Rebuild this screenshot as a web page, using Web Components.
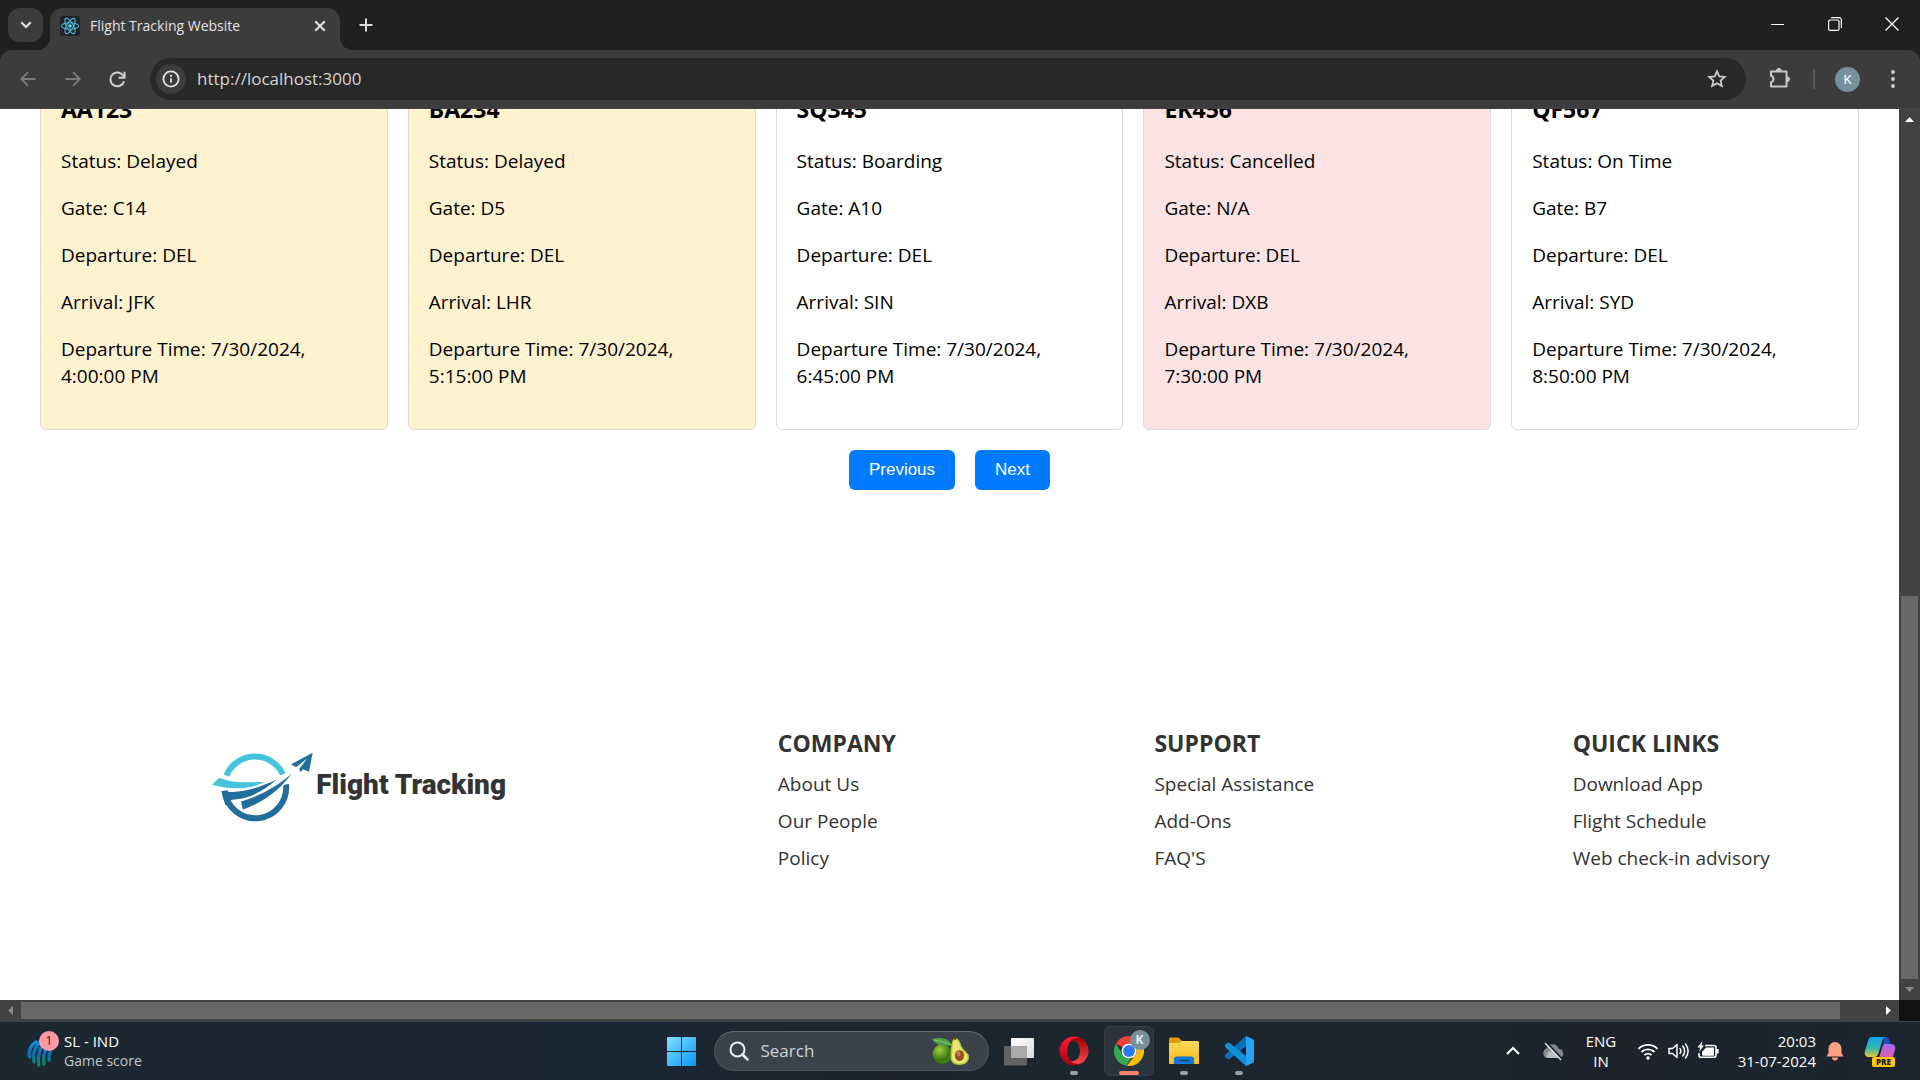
<!DOCTYPE html>
<html lang="en">
<head>
<meta charset="utf-8">
<title>Flight Tracking Website</title>
<style>
  html, body { margin: 0; height: 100%; }
  body { font-family: "Open Sans", "Noto Sans", sans-serif; overflow: hidden; }
</style>
</head>
<body>
<desktop-shell>
  <browser-tabs slot="browser"></browser-tabs>
  <browser-toolbar slot="browser"></browser-toolbar>
  <page-view slot="browser">
    <flight-list>
      <flight-card state="delayed" number="AA123" status="Delayed" gate="C14" to="JFK" time="4:00:00 PM"></flight-card>
      <flight-card state="delayed" number="BA234" status="Delayed" gate="D5" to="LHR" time="5:15:00 PM"></flight-card>
      <flight-card number="SQ345" status="Boarding" gate="A10" to="SIN" time="6:45:00 PM"></flight-card>
      <flight-card state="cancelled" number="EK456" status="Cancelled" gate="N/A" to="DXB" time="7:30:00 PM"></flight-card>
      <flight-card number="QF567" status="On Time" gate="B7" to="SYD" time="8:50:00 PM"></flight-card>
    </flight-list>
    <flight-pager></flight-pager>
    <site-footer>
      <site-logo></site-logo>
      <link-column heading="COMPANY" links="About Us|Our People|Policy"></link-column>
      <link-column heading="SUPPORT" links="Special Assistance|Add-Ons|FAQ'S"></link-column>
      <link-column heading="QUICK LINKS" links="Download App|Flight Schedule|Web check-in advisory"></link-column>
    </site-footer>
  </page-view>
  <task-bar slot="taskbar"></task-bar>
</desktop-shell>

<script>
const BASE = `:host,*{box-sizing:border-box}
  button{font:inherit;color:inherit;background:none;border:0;padding:0;margin:0;display:flex;align-items:center;justify-content:center;flex:none}
  svg{display:block;flex:none}`;

function element(name, css, html) {
  customElements.define(name, class extends HTMLElement {
    constructor() {
      super();
      const root = this.attachShadow({ mode: 'open' });
      const markup = typeof html === 'function' ? html(this) : html;
      root.innerHTML = `<style>${BASE}${css}</style>${markup}`;
    }
  });
}

element('desktop-shell', `
  :host{display:flex;flex-direction:column;height:100vh;background:#1f2120}
  .browser{flex:1;min-height:0;display:flex;flex-direction:column}`,
  `<div class="browser"><slot name="browser"></slot></div><slot name="taskbar"></slot>`);

/* ---------- browser window ---------- */
element('browser-tabs', `
  :host{display:flex;align-items:flex-end;height:50px;flex:none;background:#1f2120;color:#e3e3e3;padding-left:8px}
  .search{width:35px;height:34px;border-radius:12px;background:#3c3c3c;margin-bottom:8px}
  .tab{position:relative;display:flex;align-items:center;width:290px;height:42px;margin-left:7px;padding:0 12px 6px 10px;background:#3c3c3c;border-radius:13px 13px 0 0;font-size:14px;line-height:20px}
  .tab::before,.tab::after{content:"";position:absolute;bottom:0;width:13px;height:13px}
  .tab::before{right:100%;background:radial-gradient(circle at 0 0,transparent 13px,#3c3c3c 13px)}
  .tab::after{left:100%;background:radial-gradient(circle at 100% 0,transparent 13px,#3c3c3c 13px)}
  .title{flex:1;margin-left:10px;white-space:nowrap}
  .add{width:36px;height:34px;margin:0 0 8px 8px}
  .win{display:flex;margin-left:auto;align-self:stretch}
  .win button{width:57px;height:48px}`,
  `<button class="search" aria-label="Search tabs"><svg width="12" height="8" viewBox="0 0 12 8" fill="none" stroke="#e3e3e3" stroke-width="2.2"><path d="M1.3 1.3 6 6l4.700-4.700"/></svg></button>
  <div class="tab">
    <svg width="20" height="20" viewBox="0 0 20 20"><rect width="20" height="20" rx="2" fill="#20232a"/><g fill="none" stroke="#4fb9d3" stroke-width="1.100"><ellipse cx="10" cy="10" rx="8.600" ry="3.300"/><ellipse cx="10" cy="10" rx="8.600" ry="3.300" transform="rotate(60 10 10)"/><ellipse cx="10" cy="10" rx="8.600" ry="3.300" transform="rotate(120 10 10)"/></g><circle cx="10" cy="10" r="1.800" fill="#61dafb"/></svg>
    <span class="title">Flight Tracking Website</span>
    <button aria-label="Close tab"><svg width="16" height="16" viewBox="0 0 16 16" stroke="#e3e3e3" stroke-width="2"><path d="m3.200 3.200 9.600 9.600M12.800 3.200l-9.600 9.600"/></svg></button>
  </div>
  <button class="add" aria-label="New tab"><svg width="14" height="14" viewBox="0 0 14 14" stroke="#dcdcdc" stroke-width="2"><path d="M7 .5v13M.5 7h13"/></svg></button>
  <div class="win">
    <button aria-label="Minimize"><svg width="13" height="13" viewBox="0 0 13 13"><path d="M0 6h13v1H0z" fill="#fff"/></svg></button>
    <button aria-label="Restore"><svg width="14" height="14" viewBox="0 0 14 14" fill="none" stroke="#fff" stroke-width="1.200"><rect x=".6" y="3" width="10.400" height="10.400" rx="1.500"/><path d="M3.200 .700H11a2.400 2.400 0 0 1 2.400 2.400V11" /></svg></button>
    <button aria-label="Close"><svg width="14" height="14" viewBox="0 0 14 14" stroke="#fff" stroke-width="1.200"><path d="m.5.5 13 13M13.500.5l-13 13"/></svg></button>
  </div>`);

element('browser-toolbar', `
  :host{display:block;flex:none;background:#1f2120}
  .bar{display:flex;align-items:center;height:59px;padding:0 5px;background:#3c3c3c;border-radius:12px 12px 0 0;border-bottom:1px solid #444}
  .nav{width:45px;height:40px}
  .omni{display:flex;align-items:center;flex:1;height:42px;margin-left:10px;padding:0 18px 0 6px;border-radius:21px;background:#282828}
  .info{width:30px;height:30px;border-radius:50%;background:#3c3c3c}
  input{flex:1;min-width:0;margin:0 8px 0 11px;padding:0;border:0;outline:0;background:none;color:#d6d6d6;font:17px/24px "Open Sans","Noto Sans",sans-serif}
  .ext{width:67px;height:40px}
  i{width:2px;height:20px;background:#5a5a5a}
  .me{width:25px;height:25px;border-radius:50%;background:#78909c;color:#fff;font:13px/25px Roboto,sans-serif;margin:0 21px 0 20px}
  .more{width:24px;height:40px;margin-right:10px}`,
  `<div class="bar">
    <button class="nav" aria-label="Back"><svg width="16" height="16" viewBox="0 0 16 16" fill="none" stroke="#7c7c7c" stroke-width="1.800"><path d="M15.500 8H1.500M8 1.200 1.300 8 8 14.800"/></svg></button>
    <button class="nav" aria-label="Forward"><svg width="16" height="16" viewBox="0 0 16 16" fill="none" stroke="#7c7c7c" stroke-width="1.800"><path d="M.5 8h14M8 1.200 14.700 8 8 14.800"/></svg></button>
    <button class="nav" aria-label="Reload"><svg width="17" height="17" viewBox="0 0 17 17" fill="none" stroke="#d0d0d0" stroke-width="2"><path d="M15 10.200A6.900 6.900 0 1 1 14.200 4.800L15.500 6.500"/><path d="M15.500.8v5.900H9.600"/></svg></button>
    <div class="omni">
      <button class="info" aria-label="Site information"><svg width="18" height="18" viewBox="0 0 18 18" fill="none" stroke="#e3e3e3" stroke-width="1.800"><circle cx="9" cy="9" r="7.600"/><path d="M9 8.200v4.600M9 4.800v1.900"/></svg></button>
      <input aria-label="Address" value="http://localhost:3000">
      <button aria-label="Bookmark"><svg width="22" height="22" viewBox="0 0 22 22" fill="none" stroke="#d0d0d0" stroke-width="1.700"><path d="m11 3.200 2.200 5.200 5.700.5-4.300 3.700 1.300 5.500L11 15.200l-4.900 2.900 1.300-5.500-4.300-3.700 5.700-.5z"/></svg></button>
    </div>
    <button class="ext" aria-label="Extensions"><svg width="22" height="22" viewBox="0 0 22 22" fill="none" stroke="#c8c8c8" stroke-width="2" stroke-linejoin="round"><path d="M2 3.500h15.500v15H2v-4.300a3.300 3.300 0 0 0 0-6.400z"/><path d="M7.500 2.800a2.400 2.400 0 0 1 4.800 0zM18.200 8.800a2.400 2.400 0 0 1 0 4.800z" fill="#c8c8c8" stroke-width="1"/></svg></button>
    <i></i>
    <button class="me" aria-label="Profile K">K</button>
    <button class="more" aria-label="Menu"><svg width="4" height="18" viewBox="0 0 4 18" fill="#d0d0d0"><circle cx="2" cy="2" r="1.900"/><circle cx="2" cy="9" r="1.900"/><circle cx="2" cy="16" r="1.900"/></svg></button>
  </div>`);

element('scroll-bar', `
  :host{display:flex;background:#424242}
  :host([axis=y]){flex-direction:column;width:21px}
  :host([axis=x]){height:21px}
  b{flex:none;width:21px;height:21px;display:grid;place-items:center}
  .thumb{background:#686868}
  :host([axis=y]) .thumb{margin:0 2px}
  :host([axis=x]) .thumb{margin:2px 0}`,
  host => {
    const y = host.getAttribute('axis') === 'y';
    const tri = (d, c) => `<b><svg width="9" height="9" viewBox="0 0 9 9" fill="${c}"><path d="${d}"/></svg></b>`;
    return y
      ? tri('M0 7h9L4.500 2z', '#fff') + '<span style="flex:466"></span><span class="thumb" style="flex:383"></span>' + tri('M0 2h9L4.500 7z', '#8a8a8a')
      : tri('M7 0v9L2 4.500z', '#8a8a8a') + '<span class="thumb" style="flex:1819"></span><span style="flex:38"></span>' + tri('M2 0v9l5-4.500z', '#fff');
  });

/* Page is scrolled to its end: content is anchored to the bottom edge. */
element('page-view', `
  :host{flex:1;min-height:0;display:grid;grid-template:minmax(0,1fr) 21px / minmax(0,1fr) 21px;background:#fff}
  main{display:flex;flex-direction:column;justify-content:flex-end;overflow:hidden;background:#fff}
  .corner{background:#121212}`,
  `<main><slot></slot></main><scroll-bar axis="y"></scroll-bar><scroll-bar axis="x"></scroll-bar><div class="corner"></div>`);

element('flight-list', `
  :host{display:grid;flex:none;grid-template-columns:repeat(5,minmax(0,1fr));gap:20px;padding:0 40px}`, `<slot></slot>`);

element('flight-card', `
  :host{display:block;padding:20px 20px 19px;border:1px solid #ddd;border-radius:6px;background:#fff;color:#000;font-size:19px;line-height:27px}
  :host([state=delayed]){background:#fff2cf}
  :host([state=cancelled]){background:#fbe3e3}
  h3{margin:0 0 23px;font-size:23px;line-height:31px;font-weight:700}
  p{margin:0 0 20px}`,
  h => {
    const a = n => h.getAttribute(n);
    return `<h3>${a('number')}</h3><p>Status: ${a('status')}</p><p>Gate: ${a('gate')}</p><p>Departure: DEL</p><p>Arrival: ${a('to')}</p><p>Departure Time: 7/30/2024, ${a('time')}</p>`;
  });

element('flight-pager', `
  :host{display:flex;flex:none;justify-content:center;gap:20px;margin-top:20px}
  button{height:40px;padding:0 20px;border-radius:6px;background:#007bff;color:#fff;font:17px/20px "Liberation Sans",Arial,sans-serif}`,
  `<button>Previous</button><button>Next</button>`);

element('site-footer', `
  :host{display:flex;flex:none;justify-content:space-around;align-items:flex-start;margin-top:238px;padding-bottom:128px;color:#333}`, `<slot></slot>`);

element('site-logo', `
  :host{display:flex;align-items:center;width:390px;height:118px;padding-left:81px;font:900 28px/36px Roboto,sans-serif;color:#333;white-space:nowrap}
  span{padding-bottom:4px}`,
  `<svg width="106" height="72" viewBox="60 96 318 216" aria-hidden="true">
    <path d="M109 170A93 93 0 0 1 279 166" fill="none" stroke="#45c3da" stroke-width="18"/>
    <path d="M104 215A92 92 0 0 0 288 196" fill="none" stroke="#216e9d" stroke-width="18"/>
    <path d="M94 216c56 10 110-8 168-35-32 26-62 46-96 55-20 5-36 4-48 8l12 20-24-6z" fill="#216e9d"/>
    <path d="M150 246C225 225 275 190 318 150 282 205 230 250 157 275z" fill="#216e9d" stroke="#fff" stroke-width="5"/>
    <path d="M88 176c40 17 84 14 134 13-36 20-92 26-156 8z" fill="#45c3da"/>
    <path d="M368 101 303 136l15 9 34-27-24 31 3 11 8-9 18 7z" fill="#216e9d"/>
  </svg><span>Flight Tracking</span>`);

element('link-column', `
  :host{display:block}
  h3{margin:0 0 12px;font-size:23px;line-height:31px;font-weight:700}
  ul{list-style:none;margin:0;padding:0;display:flex;flex-direction:column;gap:10px;font-size:19px;line-height:27px}
  a{display:block;color:inherit;text-decoration:none}`,
  h => `<h3>${h.getAttribute('heading')}</h3><ul>${h.getAttribute('links').split('|').map(t => `<li><a href="#">${t}</a></li>`).join('')}</ul>`);

/* ---------- taskbar ---------- */
element('task-app', `
  :host{display:block;flex:none;margin-left:5px}
  button{position:relative;width:50px;height:50px;border-radius:6px}
  :host([active]) button{background:#2b333c;border:1px solid #353e47}
  :host([running]) button::after{content:"";position:absolute;bottom:1px;width:8px;height:4px;border-radius:2px;background:#9a9fa4}
  :host([active]) button::after{bottom:0;width:20px;background:#f4836a}`,
  h => `<button aria-label="${h.getAttribute('label')}"><slot></slot></button>`);

element('task-bar', `
  :host{display:flex;align-items:center;flex:none;height:59px;border-top:1px solid #36404a;background:linear-gradient(90deg,#1b2731,#1a2734 34%,#1e232c 46%,#1c262f 56%,#1c252f 76%,#1e222b 84%,#1b2630);color:#fff;font-size:15px;line-height:20px}
  .side{flex:1;display:flex;align-items:center;min-width:0}
  .widget{gap:11px;margin-left:27px;text-align:left}
  .ball{position:relative;width:26px;height:32px;flex:none}
  .ball svg{margin-top:4px}
  .count{position:absolute;left:12px;top:-4px;width:20px;height:20px;border-radius:50%;background:#ff99a4;color:#1b1b1b;font-size:12px;line-height:20px;text-align:center}
  .sub{color:#c4c8cc;display:block;font-size:14px}
  .start{width:50px;height:50px;margin-right:7px}
  label{display:flex;align-items:center;width:275px;height:40px;padding:0 18px 0 14px;border-radius:20px;background:#3b424b;border:1px solid #4c535b;border-top-color:#646a71}
  input{flex:1;min-width:0;padding:0;margin:0 8px 0 12px;border:0;outline:0;background:none;color:#fff;font:17px/22px "Open Sans","Noto Sans",sans-serif}
  input::placeholder{color:#d0d3d6;opacity:1}
  .k{position:absolute;right:3px;top:3px;width:20px;height:20px;border-radius:50%;background:#78909c;color:#e4e8ea;font:700 12px/20px Roboto,sans-serif;text-align:center}
  .end{justify-content:flex-end}
  .lang{width:40px;margin:0 15px 0 16px;text-align:center}
  .quick{gap:6px}
  .clock{width:90px;margin:0 9px 0 6px;text-align:right;justify-content:flex-end}
  .clock,.lang{white-space:nowrap}
  .cloud{margin-left:18px}
  .copilot{position:relative;margin:0 24px 0 19px;width:32px;height:32px}
  .pre{position:absolute;left:8px;bottom:0;width:23px;height:10px;border-radius:2px;background:#ffc60a;color:#221a00;font:900 8px/10px "Open Sans",sans-serif;text-align:center}`,
  `<div class="side">
    <button class="widget">
      <span class="ball"><svg width="26" height="28" viewBox="0 0 26 28" fill="none"><defs><linearGradient id="g" x1="0" y1="0" x2="0" y2="28" gradientUnits="userSpaceOnUse"><stop stop-color="#1d8fe0"/><stop offset=".5" stop-color="#0c6fb4"/><stop offset="1" stop-color="#0b8a50"/></linearGradient></defs><g stroke="url(#g)" stroke-width="3.400" stroke-linecap="round"><path d="M9 3C4 6 1.500 11 2.500 18"/><path d="M13 3C8 8 5.500 15 7 23"/><path d="M17 4c-5 6-6.500 13-5.200 22"/><path d="M20 8c-3 5-4 11-3 17"/><path d="M23.500 12c-1.500 3-1.800 6-1.500 9"/></g></svg><span class="count">1</span></span>
      <span>SL - IND<span class="sub">Game score</span></span>
    </button>
  </div>
  <button class="start" aria-label="Start"><svg width="29" height="29" viewBox="0 0 29 29"><defs><linearGradient id="w" x1="0" y1="0" x2="1" y2="1" gradientUnits="objectBoundingBox"><stop stop-color="#7fe0ff"/><stop offset="1" stop-color="#0a96f5"/></linearGradient></defs><path d="M0 1a1 1 0 0 1 1-1h13v14H0zM15 0h13a1 1 0 0 1 1 1v13H15zM0 15h14v14H1a1 1 0 0 1-1-1zM15 15h14v13a1 1 0 0 1-1 1H15z" fill="url(#w)"/></svg></button>
  <label><svg width="20" height="20" viewBox="0 0 20 20" fill="none" stroke="#eceef0" stroke-width="2"><circle cx="8.500" cy="8.500" r="7"/><path d="m13.500 13.500 5 5" stroke-width="2.600" stroke-linecap="round"/></svg>
    <input type="text" placeholder="Search" aria-label="Search">
    <svg width="38" height="28" viewBox="0 0 38 28"><defs><radialGradient id="av" cx=".35" cy=".3"><stop stop-color="#9ccc3c"/><stop offset="1" stop-color="#3f7a14"/></radialGradient></defs><circle cx="10.500" cy="17" r="10" fill="url(#av)"/><path d="M0 2C8 0 17 1 20 8 11 10 3 8 0 2z" fill="#4f9e46"/><path d="M2 3c6 1 12 2 17 5" stroke="#8bc77b" fill="none"/><path d="M23 1c4 0 5 4 7 9 2 4 7 6 7 10 0 5-4 8-9.500 8S18 25 18.500 19C19 12 19 2 23 1z" fill="#b5c936"/><path d="M23 2.500c3 0 4 4 6 8.500 2 4 6.500 5.500 6.500 9 0 4-3.500 6.500-8 6.500S19.500 24 20 19C20.500 12 20.500 3 23 2.500z" fill="#ebe673"/><ellipse cx="27.500" cy="18.500" rx="4.600" ry="5.600" fill="#9b4f22"/><ellipse cx="26.500" cy="16.500" rx="2" ry="2.600" fill="#c98552"/><path d="m22.500 0 .8 3" stroke="#7b3d12" stroke-width="1.500"/></svg>
  </label>
  <task-app label="Task view"><svg width="30" height="29" viewBox="0 0 30 29"><defs><linearGradient id="tv" x1="0" y1="0" x2="1" y2="1"><stop stop-color="#fff"/><stop offset="1" stop-color="#dcdcdc"/></linearGradient></defs><rect x="7" y="1" width="23" height="20" rx="1" fill="url(#tv)"/><rect y="9" width="23" height="19.500" rx="1" fill="#6b6b6b" opacity=".88"/><path d="M7 9h16v12H7z" fill="#a9a9a9"/></svg></task-app>
  <task-app running label="Opera"><svg width="30" height="30" viewBox="0 0 30 30"><defs><linearGradient id="op" x1="0" y1="0" x2="0" y2="1"><stop stop-color="#ff1b2d"/><stop offset="1" stop-color="#a70014"/></linearGradient><linearGradient id="oq" x1="0" y1="0" x2="0" y2="1"><stop stop-color="#9c0000"/><stop offset="1" stop-color="#ff4b4b"/></linearGradient></defs><path d="M15 .5a14.500 14.500 0 1 0 0 29 14.500 14.500 0 0 0 9-3.300c-9 4-15.500-1-15.500-11.200S15 0 24 3.800A14.500 14.500 0 0 0 15 .5z" fill="url(#op)"/><path d="M11 5.500C20-1 26 3 27.500 7.500a14.500 14.500 0 0 1-3.500 18.700c-5 3-10 1.500-13-1.700 5 2 10-2 10-9.500s-5-11.500-10-9.500z" fill="url(#oq)"/></svg></task-app>
  <task-app running active label="Google Chrome"><svg width="30" height="30" viewBox="0 0 48 48"><path d="M24 0a24 24 0 0 1 20.800 12H24a12 12 0 0 0-10.400 6L3.200 12A24 24 0 0 1 24 0z" fill="#ea4335"/><path d="M3.200 12 13.600 30A12 12 0 0 0 24 36l-10.400 0zL13.600 30A12 12 0 0 0 27.100 35.600L20 47.700A24 24 0 0 1 3.200 12z" fill="#34a853"/><path d="M44.800 12A24 24 0 0 1 20.500 47.700L34.400 30A12 12 0 0 0 34.400 18L32 12z" fill="#fbbc05"/><circle cx="24" cy="24" r="12" fill="#fff"/><circle cx="24" cy="24" r="9.500" fill="#2a7bf0"/></svg><span class="k">K</span></task-app>
  <task-app running label="File Explorer"><svg width="30" height="28" viewBox="0 0 30 28"><defs><linearGradient id="fe" x1="0" y1="0" x2="0" y2="1"><stop stop-color="#ffd95a"/><stop offset="1" stop-color="#f8b91c"/></linearGradient></defs><path d="M0 2a1.500 1.500 0 0 1 1.500-1.500H9.500L13 4v6H0z" fill="#e09a0a"/><path d="M0 6h10l3-2h15.500A1.500 1.500 0 0 1 30 5.500V27H0z" fill="url(#fe)"/><path d="M5 27v-5a2.500 2.500 0 0 1 2.500-2.500h15A2.500 2.500 0 0 1 25 22v5z" fill="#0f78d4"/><path d="M9 23.500h12" stroke="#0a4b8a" stroke-width="1.500"/></svg></task-app>
  <task-app running label="Visual Studio Code"><svg width="30" height="30" viewBox="0 0 30 30"><path d="M22 0 2 18c-1.500 1.500-1.500 2.500-.3 3.700l1.500 1.200c.8.600 1.600.5 2.400 0L22 10z" fill="#0a71bd"/><path d="M22 30 2 12C.5 10.500.5 9.500 1.700 8.300l1.500-1.200c.8-.6 1.600-.5 2.400 0L22 20z" fill="#168ed8"/><path d="m22 0 7 3.300q1 .6 1 1.700v20q0 1.100-1 1.700L22 30z" fill="#27a3f2"/></svg></task-app>
  <div class="side end">
    <button aria-label="Hidden icons"><svg width="20" height="20" viewBox="0 0 20 20" fill="none" stroke="#fff" stroke-width="2"><path d="m4 13 6-6 6 6"/></svg></button>
    <button class="cloud" aria-label="OneDrive"><svg width="24" height="20" viewBox="0 0 24 20"><path d="M6 17a5 5 0 0 1-.5-9.500 6.500 6.500 0 0 1 12.300.5A4.600 4.600 0 0 1 19 17z" fill="#85898e"/><path d="M6 17a5 5 0 0 1 4-7l9 7z" fill="#b9bcbf"/><path d="m5 1 16 17" stroke="#1c242e" stroke-width="2"/><path d="m4 2 16 17" stroke="#e0e2e4" stroke-width="1.500"/></svg></button>
    <button class="lang">ENG<br>IN</button>
    <button class="quick" aria-label="Network, volume, battery">
      <svg width="24" height="20" viewBox="0 0 24 20" fill="none" stroke="#fff" stroke-width="1.800"><path d="M2.500 7.800a13.500 13.500 0 0 1 19 0M5.500 11a9.200 9.200 0 0 1 13 0M8.500 14.200a5 5 0 0 1 7 0"/><circle cx="12" cy="17" r="1.700" fill="#fff" stroke="none"/></svg>
      <svg width="24" height="20" viewBox="0 0 24 20" fill="none" stroke="#fff" stroke-width="1.500" stroke-linejoin="round" stroke-linecap="round"><path d="M3 7.500h3.500L11 3.500v13l-4.500-4H3zM14 7.500q1.800 2.500 0 5M16.800 5q3.700 5 0 10M19.600 3q5 7 0 14"/></svg>
      <svg width="24" height="20" viewBox="0 0 24 20" fill="none" stroke="#fff" stroke-width="1.600"><path d="M9 4.500h9a2 2 0 0 1 2 2v7.800a2 2 0 0 1-2 2H5a2 2 0 0 1-2-2V12"/><path d="M6 14V11l4-4.500h8v8.300H7z" fill="#fff" stroke="none"/><path d="M21.500 8v4.500" stroke-width="2.200"/><path d="M6.500 0 1.500 6.500h2.800L3 11l5-6.500H5.500z" fill="#fff" stroke="none"/></svg>
    </button>
    <button class="clock">20:03<br>31-07-2024</button>
    <button aria-label="Notifications"><svg width="20" height="20" viewBox="0 0 20 20" fill="#ff9f85"><path d="M10 1a6.500 6.500 0 0 1 6.500 6.500V12l2 3.500H1.500l2-3.500V7.500A6.500 6.500 0 0 1 10 1zM7 16.500h6a3 3 0 0 1-6 0z"/></svg></button>
    <button class="copilot" aria-label="Copilot"><svg width="32" height="32" viewBox="0 0 32 32"><defs><linearGradient id="ca" x1="0" y1="0" x2="0" y2="1"><stop stop-color="#1aa0f0"/><stop offset=".55" stop-color="#2fb7b0"/><stop offset="1" stop-color="#e6c92d"/></linearGradient><linearGradient id="cb" x1="0" y1="0" x2="0" y2="1"><stop stop-color="#a268f2"/><stop offset="1" stop-color="#f25c8f"/></linearGradient></defs><path d="M19 2h3c2 0 2.800 1.500 3.500 4l1 3H20z" fill="#1b4fc4"/><path d="M8 2h13c-2 1-2.600 3-3.300 5.500L14.500 18c-.8 2.600-2 4-4.500 4H5c-3.500 0-5-2.500-4-6L4 6c.8-2.600 2-4 4-4z" fill="url(#ca)"/><path d="M21 9h6c3.500 0 5 2.500 4 6l-2.500 8c-.8 2.600-2 4-4 4H12c2-1 2.800-3 3.500-5.500L18 13c.7-2.500 1.500-4 3-4z" fill="url(#cb)"/></svg><span class="pre">PRE</span></button>
  </div>`);
</script>
</body>
</html>
